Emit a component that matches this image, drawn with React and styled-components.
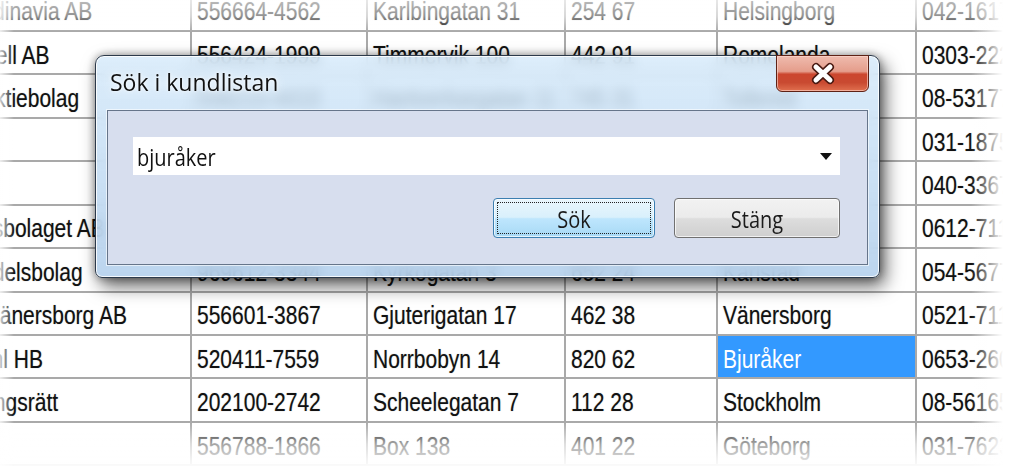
import React from "react";
import styled, { createGlobalStyle } from "styled-components";

const GlobalStyle = createGlobalStyle`
  html, body {
    margin: 0;
    padding: 0;
    background: #fff;
  }
`;

const Page = styled.div`
  position: relative;
  width: 1023px;
  height: 466px;
  overflow: hidden;
  background: #fff;
  font-family: "Liberation Sans", Arial, sans-serif;
`;

const Grid = styled.div`
  display: grid;
  grid-template-columns: 328px 176px 198px 152px 199px 240px;
  grid-auto-rows: 43.45px;
  margin-left: -136px;
  margin-top: -11.5px;
`;

const Cell = styled.div`
  box-sizing: border-box;
  display: flex;
  align-items: center;
  padding: 6px 5px 0;
  border-right: 2px solid #a9a9a9;
  border-bottom: 2px solid #a9a9a9;
  font-size: 21px;
  white-space: nowrap;
  overflow: hidden;
  color: ${(p) => (p.$sel ? "#fff" : "#111")};
  text-shadow: ${(p) => (p.$sel ? "none" : "0 0 1px rgba(0, 0, 0, 0.35)")};
  background: ${(p) => (p.$sel ? "#3399ff" : "transparent")};
  background-clip: padding-box;
`;

// the screenshot is stretched vertically, so glyphs are taller than wide
const Stretch = styled.span`
  display: inline-block;
  transform: scaleY(${(p) => p.$y || 1.2});
`;

const Dialog = styled.div`
  position: absolute;
  left: 95px;
  top: 55px;
  width: 785px;
  height: 223px;
  box-sizing: border-box;
  display: flex;
  flex-direction: column;
  border: 1px solid #2c3a4b;
  border-radius: 9px 9px 7px 7px;
  background: linear-gradient(
    180deg,
    rgba(212, 233, 250, 0.8) 0%,
    rgba(192, 218, 242, 0.84) 55%,
    rgba(178, 207, 236, 0.88) 100%
  );
  backdrop-filter: blur(6px);
  box-shadow: inset 0 0 0 1px rgba(255, 255, 255, 0.85),
    5px 8px 18px rgba(0, 0, 0, 0.62), 0 0 9px rgba(0, 0, 0, 0.38);
`;

const TitleBar = styled.div`
  height: 54px;
  display: flex;
  justify-content: space-between;
  align-items: flex-start;
  padding: 0 10px 0 14px;
`;

const Title = styled.div`
  margin-top: 10px;
  font-family: "Open Sans", "Noto Sans", sans-serif;
  font-size: 23px;
  color: #111;
  text-shadow: 0 0 8px rgba(255, 255, 255, 0.95), 0 0 3px rgba(255, 255, 255, 0.9);
`;

const CloseButton = styled.div`
  margin-top: -1px;
  width: 93px;
  height: 37px;
  box-sizing: border-box;
  display: flex;
  align-items: center;
  justify-content: center;
  border: 1px solid #5e2216;
  border-radius: 0 0 6px 6px;
  background: linear-gradient(
    180deg,
    #efbbae 0%,
    #e59d8b 44%,
    #cc462e 52%,
    #c94a31 76%,
    #e0704f 100%
  );
  box-shadow: inset 0 0 0 1px rgba(255, 220, 210, 0.6);
`;

const Client = styled.div`
  flex: 1;
  margin: 0 11px 12px 11px;
  box-sizing: border-box;
  display: flex;
  flex-direction: column;
  padding: 26px 27px 26px 25px;
  background: #d7deee;
  border: 1px solid #66758a;
  box-shadow: 0 0 0 1px rgba(255, 255, 255, 0.6);
  font-family: "Open Sans", "Noto Sans", sans-serif;
  font-size: 20px;
  color: #111;
`;

const Combo = styled.div`
  height: 38px;
  display: flex;
  align-items: center;
  justify-content: space-between;
  padding: 0 8px 0 4px;
  background: #fff;
`;

const Arrow = styled.span`
  width: 0;
  height: 0;
  border-left: 6px solid transparent;
  border-right: 6px solid transparent;
  border-top: 7px solid #111;
`;

const ButtonRow = styled.div`
  display: flex;
  justify-content: flex-end;
  gap: 19px;
  margin-top: 23px;
`;

const Button = styled.div`
  position: relative;
  width: ${(p) => p.$w}px;
  height: 40px;
  box-sizing: border-box;
  display: flex;
  align-items: center;
  justify-content: center;
  border-radius: 4px;
  border: 1px solid ${(p) => (p.$focus ? "#3c7fb1" : "#707070")};
  background: ${(p) =>
    p.$focus
      ? "linear-gradient(180deg, #eaf6fd 0%, #d9f0fc 48%, #bee6fd 52%, #a7d9f5 100%)"
      : "linear-gradient(180deg, #f2f2f2 0%, #ebebeb 48%, #dddddd 52%, #cfcfcf 100%)"};
  box-shadow: inset 0 0 0 1px rgba(255, 255, 255, 0.7);
  color: #1b1b1b;
`;

const FocusRing = styled.span`
  position: absolute;
  inset: 3px;
  border: 1px dotted #222;
  border-radius: 1px;
`;

const Fade = styled.div`
  position: absolute;
  inset: 0;
  pointer-events: none;
  background: linear-gradient(
      180deg,
      rgba(255, 255, 255, 0.72) 0px,
      rgba(255, 255, 255, 0.55) 16px,
      rgba(255, 255, 255, 0) 32px
    ),
    linear-gradient(
      0deg,
      rgba(255, 255, 255, 0.95) 0px,
      rgba(255, 255, 255, 0.62) 22px,
      rgba(255, 255, 255, 0) 44px
    ),
    linear-gradient(
      270deg,
      #fff 0px,
      #fff 20px,
      rgba(255, 255, 255, 0) 52px
    ),
    linear-gradient(
      90deg,
      rgba(255, 255, 255, 0.8) 0px,
      rgba(255, 255, 255, 0) 14px
    );
`;

// cells fully hidden behind the dialog are left blank
const rows = [
  ["Trading Skandinavia AB", "556664-4562", "Karlbingatan 31", "254 67", "Helsingborg", "042-161770"],
  ["Lund & Wendell AB", "556424-1999", "Timmervik 100", "442 91", "Romelanda", "0303-22277"],
  ["Bergströms Aktiebolag", "556215-4410", "Hantverkargatan 11", "745 31", "Tollered", "08-531770"],
  ["IKEA", "", "", "", "", "031-187500"],
  ["Elfa", "", "", "", "", "040-336700"],
  ["Norra Bostadsbolaget AB", "", "", "", "", "0612-71100"],
  ["Nilssons Handelsbolag", "969612-3344", "Kyrkogatan 3", "652 24", "Karlstad", "054-567700"],
  ["Rörservice i Vänersborg AB", "556601-3867", "Gjuterigatan 17", "462 38", "Vänersborg", "0521-71177"],
  ["Ekholm & Dahl HB", "520411-7559", "Norrbobyn 14", "820 62", "Bjuråker", "0653-26011"],
  ["Stockholms tingsrätt", "202100-2742", "Scheelegatan 7", "112 28", "Stockholm", "08-56165000"],
  ["Plåt AB", "556788-1866", "Box 138", "401 22", "Göteborg", "031-762300"],
];

const CloseIcon = () => (
  <svg width="30" height="24" viewBox="0 0 30 24">
    <path d="M8 5 L22 18 M22 5 L8 18" stroke="#4a1a12" strokeWidth="8" strokeLinecap="round" fill="none" />
    <path d="M8 5 L22 18 M22 5 L8 18" stroke="#fff" strokeWidth="5" strokeLinecap="round" fill="none" />
  </svg>
);

const App = () => {
  return (
    <Page>
      <GlobalStyle />
      <Grid>
        {rows.map((row, r) =>
          row.map((text, c) => (
            <Cell key={r + "-" + c} $sel={r === 8 && c === 4}>
              <Stretch>{text}</Stretch>
            </Cell>
          ))
        )}
      </Grid>

      <Dialog>
        <TitleBar>
          <Title>
            <Stretch $y={1.05}>Sök i kundlistan</Stretch>
          </Title>
          <CloseButton>
            <CloseIcon />
          </CloseButton>
        </TitleBar>
        <Client>
          <Combo>
            <Stretch>bjuråker</Stretch>
            <Arrow />
          </Combo>
          <ButtonRow>
            <Button $w={162} $focus>
              <FocusRing />
              <Stretch>Sök</Stretch>
            </Button>
            <Button $w={166}>
              <Stretch>Stäng</Stretch>
            </Button>
          </ButtonRow>
        </Client>
      </Dialog>

      <Fade />
    </Page>
  );
};

export default App;
